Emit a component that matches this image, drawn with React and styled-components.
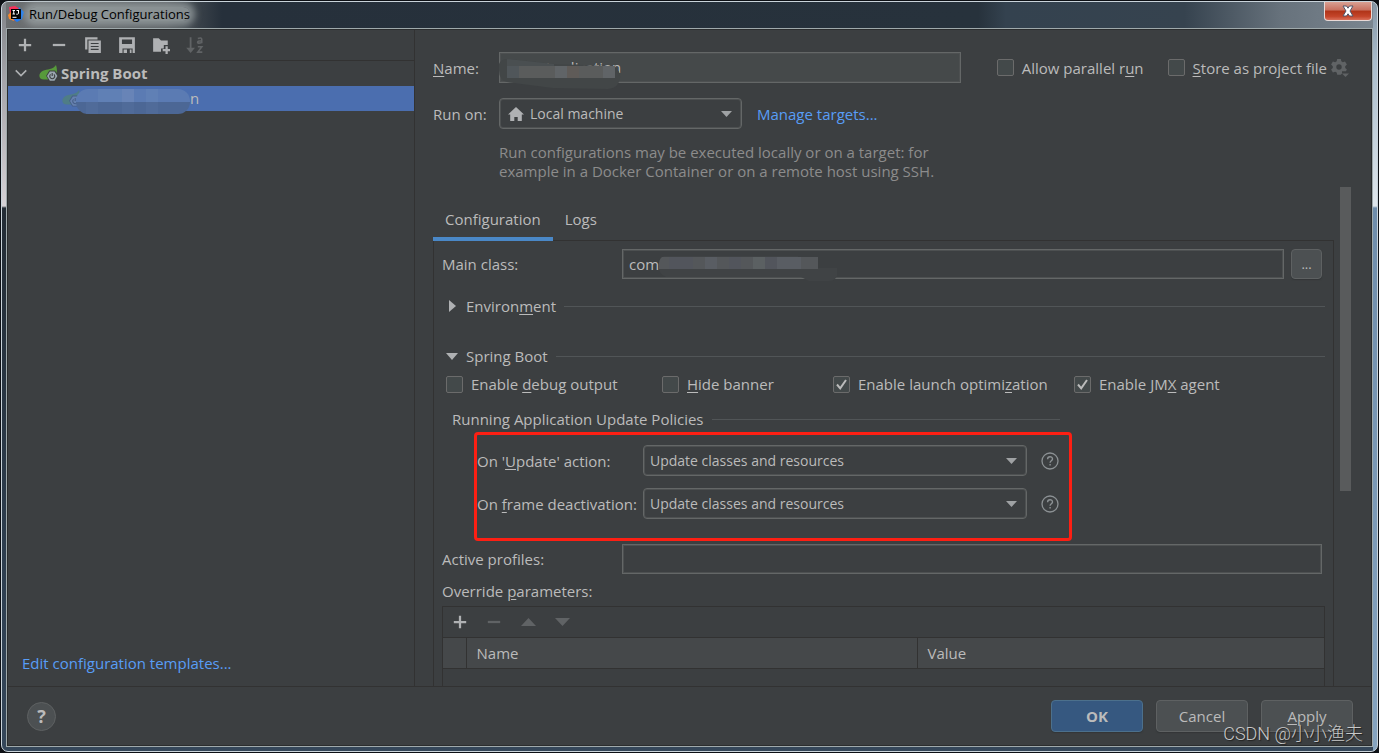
import React, { useState } from 'react'
import styled, { createGlobalStyle, css } from 'styled-components'

const colors = {
  panel: '#3c3f41',
  text: '#bbbbbb',
  muted: '#8c8c8c',
  line: '#323232',
  separator: '#515557',
  border: '#646767',
  borderSoft: '#4d5051',
  field: '#45494a',
  button: '#4c5052',
  link: '#589df6',
  select: '#4b6eaf',
  icon: '#afb1b3',
  iconOff: '#606365',
  accent: '#4a88c7',
}

const GlobalStyle = createGlobalStyle`
  * {
    box-sizing: border-box;
  }
  body {
    margin: 0;
    background: #0d1015;
    color: ${colors.text};
    font-family: 'Open Sans', 'Noto Sans CJK SC', sans-serif;
    font-size: 15px;
    line-height: 20px;
  }
  button, input, select {
    font: inherit;
    color: inherit;
    margin: 0;
  }
  u {
    text-decoration-thickness: 1px;
    text-underline-offset: 2px;
  }
  svg {
    display: block;
    flex: none;
  }
`

/* window frame */

const Screen = styled.div`
  height: 100vh;
  padding: 1px;
`

const Frame = styled.div`
  position: relative;
  display: flex;
  flex-direction: column;
  height: 100%;
  padding: 0 4px 4px;
  border: 1px solid #c9d3da;
  border-radius: 7px;
  background:
    linear-gradient(#808388, #a5a5aa 80px, #d6d2d6 204px, #232c35 206px, #2f4052 80%, #35475a) left / 4px 100% no-repeat,
    linear-gradient(#8494a3, #a9bccb 60px, #dfe6ec 204px, #6f8dab 206px, #86a4c0) right / 4px 100% no-repeat,
    linear-gradient(#35475a, #35475a) bottom / 100% 8px no-repeat,
    linear-gradient(90deg, #6d7072, #54595d 12%, #26303b 16%, #27323c 71%, #34424f 73%, #36434f 86%, #67727c 93%, #7b8690);
`

const TitleBar = styled.header`
  display: flex;
  flex: none;
  align-items: center;
  gap: 5px;
  height: 26px;
  padding: 0 0 2px 2px;
`

const Title = styled.h1`
  margin: 0;
  border-radius: 8px;
  background: rgba(160, 168, 170, 0.7);
  box-shadow: 0 0 7px 5px rgba(160, 168, 170, 0.7);
  color: #000;
  font-size: 13px;
  font-weight: 400;
  line-height: 14px;
`

const CloseButton = styled.button`
  position: absolute;
  top: 0;
  right: 5px;
  display: flex;
  align-items: center;
  justify-content: center;
  width: 48px;
  height: 19px;
  padding: 0;
  border: 1px solid #e8d9d6;
  border-top: 0;
  border-radius: 0 0 4px 4px;
  background: linear-gradient(#d9a093, #c8705f 45%, #b03418 50%, #c4452a 80%, #d9705a);
`

const Dialog = styled.main`
  display: flex;
  flex: 1;
  flex-direction: column;
  min-height: 0;
  border: 1px solid #9fa9ab;
  background: ${colors.panel};
  box-shadow: inset 0 0 0 1px #2b2d2e;
  padding: 1px;
`

const Body = styled.div`
  display: flex;
  flex: 1;
  min-height: 0;
`

/* left side */

const Sidebar = styled.aside`
  display: flex;
  flex: 0 0 407px;
  flex-direction: column;
  border-right: 1px solid ${colors.line};
`

const Toolbar = styled.div`
  display: flex;
  flex: none;
  align-items: center;
  gap: 14px;
  height: 31px;
  padding: 0 7px;
  border-bottom: 1px solid ${colors.line};
`

const IconButton = styled.button`
  display: flex;
  align-items: center;
  justify-content: center;
  width: 20px;
  height: 20px;
  padding: 0;
  border: 0;
  background: none;
  color: ${colors.icon};
  &:disabled {
    color: ${colors.iconOff};
  }
`

const Tree = styled.ul`
  flex: 1;
  margin: 0;
  padding: 0;
  list-style: none;
`

const TreeRow = styled.li`
  display: flex;
  align-items: center;
  height: 25px;
  padding: 0 0 2px ${(p) => (p.$level ? 54 : 6)}px;
  font-weight: ${(p) => (p.$level ? 400 : 700)};
  ${(p) =>
    p.$selected &&
    css`
      background: ${colors.select};
    `}
`

const TreeIcon = styled.span`
  margin: 0 2px 0 ${(p) => (p.$faded ? 0 : 11)}px;
  opacity: ${(p) => (p.$faded ? 0.35 : 1)};
`

const HiddenName = styled.span`
  position: relative;
  width: 106px;
  height: 25px;
  svg {
    position: absolute;
    top: 4px;
    left: -8px;
  }
`

const Link = styled.a`
  color: ${colors.link};
  text-decoration: none;
`

const SidebarFooter = styled.div`
  padding: 0 14px 13px;
`

/* right side */

const Editor = styled.section`
  display: flex;
  flex: 1;
  flex-direction: column;
  min-width: 0;
  padding: 22px 20px 0 18px;
`

const HeadRow = styled.div`
  display: flex;
  align-items: center;
  margin-bottom: 15px;
`

const HeadLabel = styled.label`
  flex: 0 0 66px;
`

const FieldBox = styled.div`
  position: relative;
  flex: 1;
  min-width: 0;
  > svg {
    position: absolute;
    top: 0;
    left: 0;
    pointer-events: none;
  }
`

const TextField = styled.input`
  display: block;
  width: 100%;
  height: ${(p) => (p.$filled ? 31 : 30)}px;
  padding: 0 6px 1px ${(p) => (p.$filled ? 43 : 6)}px;
  border: 1px solid ${colors.border};
  background: ${(p) => (p.$filled ? colors.field : colors.panel)};
  box-shadow: inset 0 0 0 1px ${colors.borderSoft};
  outline: 0;
`

const HeadChecks = styled.div`
  display: flex;
  align-items: center;
  gap: 24px;
  padding: 0 2px 0 36px;
`

const StoreGroup = styled.div`
  display: flex;
  align-items: center;
  gap: 4px;
`

const CheckLabel = styled.label`
  display: inline-flex;
  align-items: center;
  gap: 8px;
  white-space: nowrap;
`

const CheckBox = styled.span`
  position: relative;
  display: flex;
  svg {
    position: absolute;
    top: 0;
    left: 0;
    pointer-events: none;
  }
`

const CheckInput = styled.input`
  appearance: none;
  width: 17px;
  height: 17px;
  border: 1px solid #6b6b6b;
  border-radius: 2px;
  background: #43494a;
`

const SelectBox = styled.div`
  position: relative;
  flex: none;
  width: ${(p) => p.$width}px;
  > svg {
    position: absolute;
    top: 8px;
    left: 9px;
    color: ${colors.icon};
    pointer-events: none;
  }
  > svg:last-child {
    top: 13px;
    right: 10px;
    left: auto;
    color: #9fa2a4;
  }
`

const Select = styled.select`
  appearance: none;
  display: block;
  width: 100%;
  height: 31px;
  padding: 0 28px 0 ${(p) => (p.$withIcon ? 30 : 6)}px;
  border: 1px solid ${colors.border};
  border-radius: 4px;
  background: ${colors.panel};
  box-shadow: inset 0 0 0 1px ${colors.borderSoft};
  font-size: 14px;
  outline: 0;
`

const TargetLink = styled(Link)`
  margin-left: 15px;
`

const Hint = styled.p`
  max-width: 450px;
  margin: -1px 0 6px 66px;
  color: ${colors.muted};
  line-height: 19px;
`

const ScrollArea = styled.div`
  display: flex;
  flex: 1;
  gap: 6px;
  min-height: 0;
`

const ScrollContent = styled.div`
  flex: 1;
  min-width: 0;
  overflow: hidden;
`

const ScrollThumb = styled.div`
  flex: none;
  width: 11px;
  height: 61%;
  background: #595b5c;
`

const Tabs = styled.div`
  display: flex;
  padding-top: 13px;
`

const Tab = styled.button`
  position: relative;
  z-index: 1;
  height: 41px;
  margin-bottom: -1px;
  padding: 0 12px;
  border: 0;
  border-bottom: 4px solid ${(p) => (p.$active ? colors.accent : 'transparent')};
  background: none;
`

const TabPanel = styled.div`
  padding: 8px 8px 0;
  border: 1px solid ${colors.line};
  border-bottom: 0;
`

const FormRow = styled.div`
  display: flex;
  align-items: center;
  gap: 7px;
  padding-right: 3px;
`

const FormLabel = styled.label`
  flex: 0 0 ${(p) => p.$width}px;
  margin-right: -7px;
  white-space: nowrap;
`

const Button = styled.button`
  min-width: 92px;
  height: 32px;
  padding: 0 8px 1px;
  border: 1px solid ${(p) => (p.$primary ? '#4c708c' : '#5e6162')};
  border-radius: 4px;
  background: ${(p) => (p.$primary ? '#365880' : colors.button)};
  box-shadow: 0 1px 1px #333638;
  font-weight: ${(p) => (p.$primary ? 700 : 400)};
`

const BrowseButton = styled(Button)`
  min-width: 31px;
  height: 30px;
  font-size: 13px;
`

const Section = styled.div`
  display: flex;
  align-items: center;
  width: ${(p) => (p.$short ? '70%' : 'auto')};
  margin-top: ${(p) => p.$top}px;
  padding-left: ${(p) => (p.$short ? 10 : 4)}px;
  &::after {
    content: '';
    flex: 1;
    height: 1px;
    margin-left: 8px;
    background: ${colors.separator};
  }
`

const SectionToggle = styled.button`
  display: flex;
  align-items: center;
  gap: 8px;
  padding: 0;
  border: 0;
  background: none;
  svg {
    color: ${colors.icon};
  }
`

const ToggleArrow = styled.span`
  display: flex;
  justify-content: center;
  width: 12px;
`

const CheckRow = styled.div`
  display: grid;
  grid-template-columns: 216px 171px 241px auto;
  margin: 8px 0 15px 4px;
`

const Highlight = styled.div`
  display: flex;
  flex-direction: column;
  gap: 12px;
  width: fit-content;
  margin: 3px 0 3px 32px;
  padding: 10px 10px 19px 0;
  border: 3px solid #fd1f13;
  border-radius: 4px;
`

const PolicyRow = styled.div`
  display: flex;
  align-items: center;
`

const PolicyLabel = styled.label`
  flex: 0 0 166px;
  white-space: nowrap;
`

const HelpDot = styled.button`
  width: 18px;
  height: 18px;
  margin-left: 14px;
  padding: 0;
  border: 0;
  background: none;
  color: #8c9194;
`

const ParamsLabel = styled.div`
  margin: 7px 0 5px;
`

const ParamsBox = styled.div`
  border: 1px solid ${colors.line};
`

const ParamsTable = styled.table`
  width: 100%;
  border-collapse: collapse;
  table-layout: fixed;
  th {
    height: 30px;
    padding: 0 10px;
    border-right: 1px solid ${colors.line};
    background: #45484a;
    font-weight: 400;
    text-align: left;
  }
  th:first-child {
    width: 23px;
  }
  th:nth-child(2) {
    width: 451px;
  }
  th:last-child {
    border-right: 0;
  }
  td {
    height: 30px;
    border-top: 1px solid ${colors.line};
  }
`

const Footer = styled.footer`
  display: flex;
  flex: none;
  align-items: center;
  gap: 13px;
  height: 59px;
  padding: 0 18px 0 19px;
  border-top: 1px solid ${colors.line};
`

const HelpButton = styled.button`
  width: 29px;
  height: 29px;
  margin-right: auto;
  padding: 0;
  border: 1px solid #5e6162;
  border-radius: 50%;
  background: ${colors.button};
  font-size: 18px;
  font-weight: 700;
`

const Watermark = styled.div`
  position: absolute;
  right: 14px;
  bottom: 4px;
  color: #c8c8c8;
  font-family: Roboto, 'Noto Sans CJK SC', sans-serif;
  font-size: 18px;
  font-weight: 300;
  line-height: 26px;
  text-shadow: 1px 1px 1px #222;
  pointer-events: none;
`

/* icons */

const Svg = ({ size = 18, children, ...rest }) => (
  <svg width={size} height={size} viewBox="0 0 16 16" fill="currentColor" aria-hidden="true" {...rest}>
    {children}
  </svg>
)

const AppIcon = () => (
  <Svg size={16}>
    <path d="M1 1l6-1 5 3-4 12-7-3 1-4z" fill="#f5325b" />
    <path d="M0 9l3-3 3 9-5-2z" fill="#f98a2b" />
    <path d="M11 1l5 5-2 7-5 3-4-3 5-8z" fill="#1a7df8" />
    <path d="M3 3h10v10H3z" fill="#000" />
    <path d="M4.500 4.500h2.500M5.750 4.500v3.500M4.500 8h2.500M8.500 4.500H11M10.500 4.500v2.700q0 1-1 1H8.300M4.500 11.300h4" stroke="#fff" fill="none" />
  </Svg>
)

const PlusIcon = () => (
  <Svg>
    <path d="M7 2.500h2v4.500h4.500v2H9v4.500H7V9H2.500V7H7z" />
  </Svg>
)

const MinusIcon = () => (
  <Svg>
    <path d="M2.500 7h11v2h-11z" />
  </Svg>
)

const CopyIcon = () => (
  <Svg>
    <path d="M1 1h11v2H3v9H1z" />
    <path fillRule="evenodd" d="M4 4h11v11H4zM6 6.200v1h7v-1zm0 2.600v1h7v-1zm0 2.600v1h7v-1z" />
  </Svg>
)

const SaveIcon = () => (
  <Svg>
    <path fillRule="evenodd" d="M1 1h14v14h-2v-4H4v4H1zM3.500 3v4h9V3z" />
    <path d="M5 12h3v3H5zM10.500 12H12v3h-1.500z" />
  </Svg>
)

const FolderPlusIcon = () => (
  <Svg>
    <path d="M1 2h5l2 2h6v4h-3.500v3H8v3H1z" />
    <path d="M12 9h2v2.500h2.500v2H14V16h-2v-2.500H9.500v-2H12z" />
  </Svg>
)

const SortIcon = () => (
  <Svg>
    <path d="M3.300 1h1.600v9.500H8L4.100 15 .2 10.500h3.100z" />
    <path
      d="M10.500 2.200q3.500-1.200 3.500 1v3.200M14 4.200q-3.700 0-3.700 1.300 0 1.500 3.700.3M10.500 9.500h3.600l-3.600 4.800h4"
      fill="none"
      stroke="currentColor"
      strokeWidth="1.400"
    />
  </Svg>
)

const SpringIcon = () => (
  <svg width="20" height="18" viewBox="0 0 20 18" aria-hidden="true">
    <path d="M17 1c1 3 1.300 6 .5 8L10 15.500H5C-1 15.500-1 9 4 6.800 8 5 14 6 17 1z" fill="#579a3b" />
    <path d="M10.300 6.600h5.800l3.200 5.200-3.200 5.600h-5.800l-3.200-5.600z" fill="#3c3f41" />
    <path d="M10.900 7.400h4.600l2.900 4.500-2.900 4.900h-4.600L8 11.900z" fill="#9aa7b0" />
    <path d="M11.600 10.300a2.500 2.500 0 1 0 3.300 0M13.200 9v3" fill="none" stroke="#3c3f41" strokeWidth="1.100" />
  </svg>
)

const ChevronIcon = () => (
  <Svg size={14}>
    <path d="M2 5l6 6 6-6" fill="none" stroke={colors.icon} strokeWidth="1.800" />
  </Svg>
)

const HomeIcon = () => (
  <Svg size={16}>
    <path d="M8 1l8 7.500h-2.200V15H9.700v-4H6.300v4H2.200V8.500H0z" />
  </Svg>
)

const GearIcon = () => (
  <svg width="18" height="18" viewBox="0 0 18 18" fill={colors.iconOff} aria-hidden="true">
    <path
      fillRule="evenodd"
      d="M6.200 0h3.600l.5 2.300 1.500.9L14 2.500l1.900 3.100-1.700 1.600v1.700l1.700 1.500-1 1.800H11v2.200l-1.200 1.400H6.200l-.5-2.300-1.500-.8-2.300.7L.1 10.400l1.700-1.500V7.200L.1 5.600 1.900 2.500l2.300.7 1.500-.9zM8 5.300a2.700 2.700 0 1 0 0 5.400 2.700 2.700 0 0 0 0-5.400z"
    />
    <path d="M11 14.500h7L14.500 18z" />
  </svg>
)

const Arrow = ({ dir = 'down', w = 11, h = 6 }) => (
  <svg width={w} height={h} viewBox="0 0 10 10" preserveAspectRatio="none" fill="currentColor" aria-hidden="true">
    <path d={dir === 'down' ? 'M0 0h10L5 10z' : dir === 'up' ? 'M0 10h10L5 0z' : 'M0 0l10 5-10 5z'} />
  </svg>
)

const CheckMark = () => (
  <svg width="17" height="17" viewBox="0 0 17 17" aria-hidden="true">
    <path d="M4 8.500l3.200 3.800L13 4" fill="none" stroke={colors.text} strokeWidth="2" />
  </svg>
)

const HelpIcon = () => (
  <svg width="18" height="18" viewBox="0 0 18 18" fill="none" stroke="currentColor" aria-hidden="true">
    <circle cx="9" cy="9" r="8" strokeWidth="1.300" />
    <path d="M6.600 7.200c0-3.200 4.900-3.100 4.900-.3 0 1.800-2.400 1.900-2.400 3.900M9.100 12v1.600" strokeWidth="1.400" />
  </svg>
)

const CloseIcon = () => (
  <svg width="14" height="12" viewBox="0 0 14 12" aria-hidden="true">
    <path
      d="M2 1h3.500L7 3.200 8.500 1H12L9 6l3 5H8.500L7 8.800 5.500 11H2l3-5z"
      fill="#fff"
      stroke="#53566b"
      strokeWidth="1"
    />
  </svg>
)

/* pixelated patches over private names */

const TreeMosaic = () => (
  <svg width="114" height="25" viewBox="0 0 114 25" aria-hidden="true">
    <defs>
      <clipPath id="treePatch">
        <rect width="114" height="25" rx="12" />
      </clipPath>
    </defs>
    <g clipPath="url(#treePatch)">
      <path d="M0 0h114v13H0z" fill="#5b7bb3" />
      <path d="M22 0h24v13H22zM70 0h12v13H70z" fill="#6080b5" />
      <path d="M46 0h12v13H46z" fill="#6884b7" />
      <path d="M0 13h114v12H0z" fill="#4c6795" />
      <path d="M10 13h12v12H10zM46 13h12v12H46zM70 13h12v12H70z" fill="#506b99" />
    </g>
  </svg>
)

const NameMosaic = () => (
  <svg width="130" height="38" viewBox="0 0 130 38" aria-hidden="true">
    <path d="M0 12q2-5 8-5l47 5 57 2q10 2 9 12-1 10-12 11l-55-1-46-6Q0 28 0 18z" fill="#424647" />
    <path d="M8 7l47 5v2H8z" fill="#4a4f51" />
    <path d="M8 14h108v12H8z" fill="#5a5c5c" />
    <path d="M8 14h12v12H8z" fill="#50565a" />
    <path d="M56 14h12v12H56zM104 14h12v12h-12z" fill="#606467" />
    <path d="M68 14h12v12H68z" fill="#5f5b58" />
  </svg>
)

const ClassMosaic = () => (
  <svg width="216" height="34" viewBox="0 0 216 34" aria-hidden="true">
    <path d="M42 7h134v12h39v8q-2 5-8 5h-20l-8-4H44q-8-3-7-12 0-7 5-9z" fill="#404345" />
    <path d="M40 8h156v12H37q-1-9 3-12z" fill="#54575a" />
    <path d="M47 8h24v12H47zM107 8h12v12h-12zM143 8h12v12h-12z" fill="#52555c" />
    <path d="M83 8h12v12H83zM155 8h24v12h-24z" fill="#595d63" />
    <path d="M131 8h12v12h-12z" fill="#5b6062" />
  </svg>
)

const Check = ({ children, defaultChecked = false }) => {
  const [checked, setChecked] = useState(defaultChecked)
  return (
    <CheckLabel>
      <CheckBox>
        <CheckInput type="checkbox" checked={checked} onChange={(e) => setChecked(e.target.checked)} />
        {checked && <CheckMark />}
      </CheckBox>
      <span>{children}</span>
    </CheckLabel>
  )
}

const Combo = ({ id, width, icon, value }) => (
  <SelectBox $width={width}>
    {icon}
    <Select id={id} $withIcon={Boolean(icon)} defaultValue={value}>
      <option>{value}</option>
    </Select>
    <Arrow />
  </SelectBox>
)

const SidebarPane = () => (
  <Sidebar>
    <Toolbar>
      <IconButton aria-label="Add"><PlusIcon /></IconButton>
      <IconButton aria-label="Remove"><MinusIcon /></IconButton>
      <IconButton aria-label="Copy"><CopyIcon /></IconButton>
      <IconButton aria-label="Save"><SaveIcon /></IconButton>
      <IconButton aria-label="New folder"><FolderPlusIcon /></IconButton>
      <IconButton aria-label="Sort" disabled><SortIcon /></IconButton>
    </Toolbar>
    <Tree>
      <TreeRow>
        <ChevronIcon />
        <TreeIcon><SpringIcon /></TreeIcon>
        Spring Boot
      </TreeRow>
      <TreeRow $level={1} $selected>
        <TreeIcon $faded><SpringIcon /></TreeIcon>
        <HiddenName><TreeMosaic /></HiddenName>n
      </TreeRow>
    </Tree>
    <SidebarFooter>
      <Link href="#templates">Edit configuration templates...</Link>
    </SidebarFooter>
  </Sidebar>
)

const ConfigurationPanel = () => (
  <TabPanel>
    <FormRow>
      <FormLabel $width={180} htmlFor="main-class">Main class:</FormLabel>
      <FieldBox>
        <TextField id="main-class" defaultValue="com" />
        <ClassMosaic />
      </FieldBox>
      <BrowseButton aria-label="Browse">...</BrowseButton>
    </FormRow>

    <Section $top={17}>
      <SectionToggle>
        <ToggleArrow><Arrow dir="right" w={7} h={12} /></ToggleArrow>
        <span>Environ<u>m</u>ent</span>
      </SectionToggle>
    </Section>
    <Section $top={30}>
      <SectionToggle>
        <ToggleArrow><Arrow w={12} h={7} /></ToggleArrow>
        <span>Sprin<u>g</u> Boot</span>
      </SectionToggle>
    </Section>

    <CheckRow>
      <Check>Enable <u>d</u>ebug output</Check>
      <Check><u>H</u>ide banner</Check>
      <Check defaultChecked>Enable launch optimi<u>z</u>ation</Check>
      <Check defaultChecked>Enable JM<u>X</u> agent</Check>
    </CheckRow>

    <Section $top={0} $short>Running Application Update Policies</Section>
    <Highlight>
      <PolicyRow>
        <PolicyLabel htmlFor="on-update">On '<u>U</u>pdate' action:</PolicyLabel>
        <Combo id="on-update" width={384} value="Update classes and resources" />
        <HelpDot aria-label="Help"><HelpIcon /></HelpDot>
      </PolicyRow>
      <PolicyRow>
        <PolicyLabel htmlFor="on-frame">On <u>f</u>rame deactivation:</PolicyLabel>
        <Combo id="on-frame" width={384} value="Update classes and resources" />
        <HelpDot aria-label="Help"><HelpIcon /></HelpDot>
      </PolicyRow>
    </Highlight>

    <FormRow>
      <FormLabel $width={180} htmlFor="profiles">Active profiles:</FormLabel>
      <FieldBox>
        <TextField id="profiles" />
      </FieldBox>
    </FormRow>

    <ParamsLabel>Override <u>p</u>arameters:</ParamsLabel>
    <ParamsBox>
      <Toolbar>
        <IconButton aria-label="Add parameter"><PlusIcon /></IconButton>
        <IconButton aria-label="Remove parameter" disabled><MinusIcon /></IconButton>
        <IconButton aria-label="Move up" disabled><Arrow dir="up" w={15} h={8} /></IconButton>
        <IconButton aria-label="Move down" disabled><Arrow w={15} h={8} /></IconButton>
      </Toolbar>
      <ParamsTable>
        <thead>
          <tr>
            <th />
            <th>Name</th>
            <th>Value</th>
          </tr>
        </thead>
        <tbody>
          <tr>
            <td colSpan={3} />
          </tr>
        </tbody>
      </ParamsTable>
    </ParamsBox>
  </TabPanel>
)

export default function App() {
  const [tab, setTab] = useState('Configuration')

  return (
    <Screen>
      <GlobalStyle />
      <Frame>
        <TitleBar>
          <AppIcon />
          <Title>Run/Debug Configurations</Title>
          <CloseButton aria-label="Close"><CloseIcon /></CloseButton>
        </TitleBar>
        <Dialog>
          <Body>
            <SidebarPane />
            <Editor>
              <HeadRow>
                <HeadLabel htmlFor="name"><u>N</u>ame:</HeadLabel>
                <FieldBox>
                  <TextField id="name" $filled defaultValue="Application" />
                  <NameMosaic />
                </FieldBox>
                <HeadChecks>
                  <Check>Allow parallel r<u>u</u>n</Check>
                  <StoreGroup>
                    <Check><u>S</u>tore as project file</Check>
                    <GearIcon />
                  </StoreGroup>
                </HeadChecks>
              </HeadRow>
              <HeadRow>
                <HeadLabel htmlFor="run-on">Run on:</HeadLabel>
                <Combo id="run-on" width={243} icon={<HomeIcon />} value="Local machine" />
                <TargetLink href="#targets">Manage targets...</TargetLink>
              </HeadRow>
              <Hint>
                Run configurations may be executed locally or on a target: for
                example in a Docker Container or on a remote host using SSH.
              </Hint>
              <ScrollArea>
                <ScrollContent>
                  <Tabs>
                    {['Configuration', 'Logs'].map((name) => (
                      <Tab key={name} $active={tab === name} onClick={() => setTab(name)}>
                        {name}
                      </Tab>
                    ))}
                  </Tabs>
                  <ConfigurationPanel />
                </ScrollContent>
                <ScrollThumb />
              </ScrollArea>
            </Editor>
          </Body>
          <Footer>
            <HelpButton aria-label="Help">?</HelpButton>
            <Button $primary>OK</Button>
            <Button>Cancel</Button>
            <Button><u>A</u>pply</Button>
          </Footer>
        </Dialog>
        <Watermark>CSDN @小小渔夫</Watermark>
      </Frame>
    </Screen>
  )
}
